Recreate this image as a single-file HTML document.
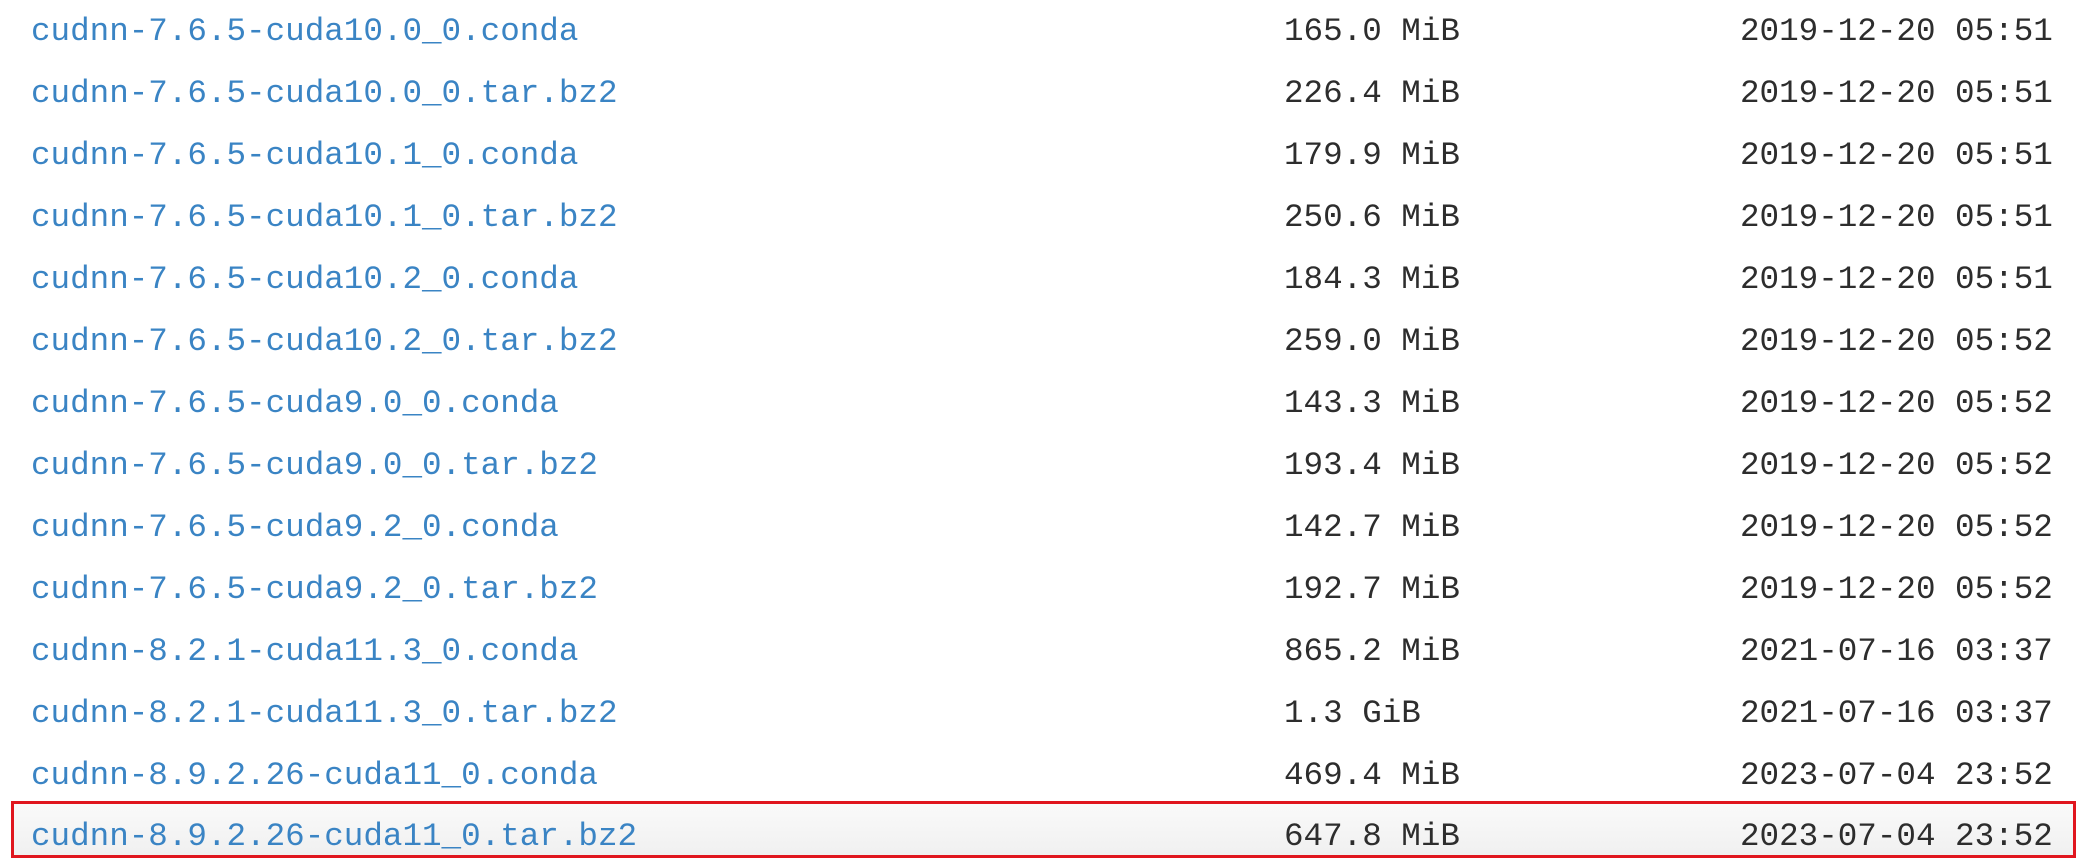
<!DOCTYPE html><html><head><style>
body{margin:0;width:2090px;height:866px;background:#fff;overflow:hidden;font-family:"Liberation Mono",monospace;font-size:32.6px;}
.r{position:absolute;left:0;width:2090px;height:62px;line-height:62px;}
.n{position:absolute;left:31px;color:#3a84c4;}
.s{position:absolute;left:1284px;color:#2d2d2d;}
.d{position:absolute;left:1740px;color:#2d2d2d;}
.box{position:absolute;left:11px;top:801px;width:2059px;height:51px;border:3px solid #e0161e;background:linear-gradient(#fafafa,#f0f0f0);}
</style></head><body>
<div class="box"></div>
<div class="r" style="top:1px"><span class="n">cudnn-7.6.5-cuda10.0_0.conda</span><span class="s">165.0 MiB</span><span class="d">2019-12-20 05:51</span></div>
<div class="r" style="top:63px"><span class="n">cudnn-7.6.5-cuda10.0_0.tar.bz2</span><span class="s">226.4 MiB</span><span class="d">2019-12-20 05:51</span></div>
<div class="r" style="top:125px"><span class="n">cudnn-7.6.5-cuda10.1_0.conda</span><span class="s">179.9 MiB</span><span class="d">2019-12-20 05:51</span></div>
<div class="r" style="top:187px"><span class="n">cudnn-7.6.5-cuda10.1_0.tar.bz2</span><span class="s">250.6 MiB</span><span class="d">2019-12-20 05:51</span></div>
<div class="r" style="top:249px"><span class="n">cudnn-7.6.5-cuda10.2_0.conda</span><span class="s">184.3 MiB</span><span class="d">2019-12-20 05:51</span></div>
<div class="r" style="top:311px"><span class="n">cudnn-7.6.5-cuda10.2_0.tar.bz2</span><span class="s">259.0 MiB</span><span class="d">2019-12-20 05:52</span></div>
<div class="r" style="top:373px"><span class="n">cudnn-7.6.5-cuda9.0_0.conda</span><span class="s">143.3 MiB</span><span class="d">2019-12-20 05:52</span></div>
<div class="r" style="top:435px"><span class="n">cudnn-7.6.5-cuda9.0_0.tar.bz2</span><span class="s">193.4 MiB</span><span class="d">2019-12-20 05:52</span></div>
<div class="r" style="top:497px"><span class="n">cudnn-7.6.5-cuda9.2_0.conda</span><span class="s">142.7 MiB</span><span class="d">2019-12-20 05:52</span></div>
<div class="r" style="top:559px"><span class="n">cudnn-7.6.5-cuda9.2_0.tar.bz2</span><span class="s">192.7 MiB</span><span class="d">2019-12-20 05:52</span></div>
<div class="r" style="top:621px"><span class="n">cudnn-8.2.1-cuda11.3_0.conda</span><span class="s">865.2 MiB</span><span class="d">2021-07-16 03:37</span></div>
<div class="r" style="top:683px"><span class="n">cudnn-8.2.1-cuda11.3_0.tar.bz2</span><span class="s">1.3 GiB</span><span class="d">2021-07-16 03:37</span></div>
<div class="r" style="top:745px"><span class="n">cudnn-8.9.2.26-cuda11_0.conda</span><span class="s">469.4 MiB</span><span class="d">2023-07-04 23:52</span></div>
<div class="r" style="top:806px"><span class="n">cudnn-8.9.2.26-cuda11_0.tar.bz2</span><span class="s">647.8 MiB</span><span class="d">2023-07-04 23:52</span></div>
</body></html>
